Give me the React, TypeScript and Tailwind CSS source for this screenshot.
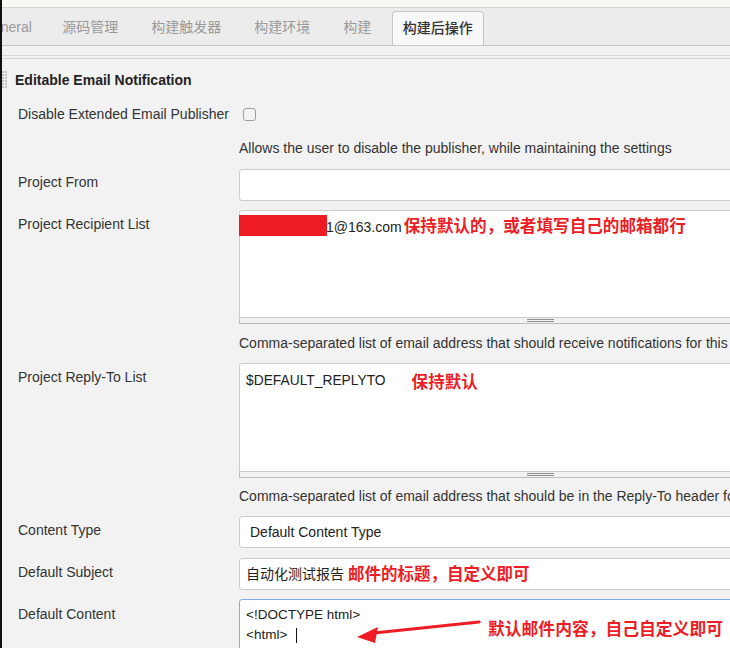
import React from "react";

function Grip() {
  return (
    <div className="h-[6px] border-l border-b border-[#bdbdbd] bg-[#f2f2f2] flex justify-center items-center">
      <div className="w-[27px] h-[3px] border-t border-b border-[#8f8f8f]" />
    </div>
  );
}

function Row({ label, pt, children }: { label: string; pt: string; children: React.ReactNode }) {
  return (
    <div className="flex">
      <div className={`w-[237px] shrink-0 pl-4 leading-[18px] text-[14px] text-[#333] ${pt}`}>{label}</div>
      <div className="w-[602px] shrink-0">{children}</div>
    </div>
  );
}

function Desc({ text, mt }: { text: string; mt: string }) {
  return (
    <div className={`flex ${mt}`}>
      <div className="w-[237px] shrink-0" />
      <div className="whitespace-nowrap leading-[18px] text-[14px] text-[#333]">{text}</div>
    </div>
  );
}

export default function App() {
  return (
    <div className="w-[730px] h-[648px] overflow-hidden bg-[#f2f2f2] border-l-2 border-[#111] relative font-['Liberation_Sans','Noto_Sans_CJK_SC',sans-serif]">
      {/* top strip */}
      <div className="h-[8px] bg-[#f8f9f3] border-b border-[#d3d3d3]" />
      {/* tab bar */}
      <div className="h-[38px] bg-[#ececec] border-b border-[#c8c8c8] flex items-end whitespace-nowrap text-[14px]">
        <div className="ml-[-36px] pl-4 pr-[14px] h-[34px] leading-[32px] text-[#9a9a9a]">General</div>
        <div className="px-[16.5px] h-[34px] leading-[32px] text-[#9a9a9a]">源码管理</div>
        <div className="px-[16.5px] h-[34px] leading-[32px] text-[#9a9a9a]">构建触发器</div>
        <div className="px-[16.5px] h-[34px] leading-[32px] text-[#9a9a9a]">构建环境</div>
        <div className="px-[16.5px] h-[34px] leading-[32px] text-[#9a9a9a]">构建</div>
        <div className="ml-[4px] h-[34px] pl-[10px] pr-[10px] leading-[32px] bg-[#f8f8f8] border border-b-0 border-[#c6c6c6] rounded-t-[4px] text-[#333] font-medium">
          构建后操作
        </div>
      </div>
      <div className="h-[10px] bg-[#f2f2f2] border-b border-[#d6d6d6]" />
      <div className="h-[3px] bg-[#f2f2f2] border-b border-[#d6d6d6]" />

      {/* content */}
      <div className="relative">
        {/* title */}
        <div className="mt-[11px] flex items-center h-[20px]">
          <svg width="6" height="18" className="shrink-0" viewBox="0 0 6 18">
            {[0, 3, 6, 9, 12, 15].map((y) =>
              [0, 3].map((x) => <rect key={`${x}-${y}`} x={x} y={y} width="2" height="2" fill="#c4c4c4" />)
            )}
          </svg>
          <div className="ml-[7px] text-[14px] font-bold text-[#222] leading-[20px]">Editable Email Notification</div>
        </div>

        {/* disable */}
        <div className="mt-[15px] flex h-[18px] items-center">
          <div className="w-[237px] shrink-0 pl-4 text-[14px] leading-[18px] text-[#333]">Disable Extended Email Publisher</div>
          <div className="ml-[4px] w-[13px] h-[13px] rounded-[3px] border border-[#9e9e9e] bg-[#f4f4f4]" />
        </div>

        <Desc mt="mt-[16px]" text="Allows the user to disable the publisher, while maintaining the settings" />

        {/* project from */}
        <div className="mt-[12px]">
          <Row label="Project From" pt="pt-[4px]">
            <div className="h-[32px] bg-white border border-[#cccccc] rounded-[3px]" />
          </Row>
        </div>

        {/* recipient list */}
        <div className="mt-[9px]">
          <Row label="Project Recipient List" pt="pt-[5px]">
            <div className="relative h-[108px] bg-white border border-[#cccccc] rounded-t-[3px] pt-[6px] leading-[20px] whitespace-nowrap">
              <div className="absolute left-[-1px] top-[4px] w-[88px] h-[21px] bg-[#ed1c24]" />
              <span className="ml-[86px] text-[14px] text-[#222]">1@163.com</span>
              <span className="ml-[2px] text-[16.6px] font-bold text-[#ee1c25]">保持默认的，或者填写自己的邮箱都行</span>
            </div>
            <Grip />
          </Row>
        </div>

        <Desc mt="mt-[10px]" text="Comma-separated list of email address that should receive notifications for this project." />

        {/* reply-to */}
        <div className="mt-[11px]">
          <Row label="Project Reply-To List" pt="pt-[5px]">
            <div className="h-[109px] bg-white border border-[#cccccc] rounded-t-[3px] pt-[7px] pl-[6px] leading-[20px] whitespace-nowrap">
              <div className="flex items-center h-[20px]">
                <span className="text-[13.8px] text-[#222]">$DEFAULT_REPLYTO</span>
                <span className="ml-[26px] mt-[3px] text-[16.6px] font-bold text-[#ee1c25]">保持默认</span>
              </div>
            </div>
            <Grip />
          </Row>
        </div>

        <Desc mt="mt-[9px]" text="Comma-separated list of email address that should be in the Reply-To header for this project." />

        {/* content type */}
        <div className="mt-[11px]">
          <Row label="Content Type" pt="pt-[5px]">
            <div className="h-[32px] bg-white border border-[#cccccc] rounded-[3px] pl-[10px] flex items-center text-[14px] text-[#222]">
              Default Content Type
            </div>
          </Row>
        </div>

        {/* subject */}
        <div className="mt-[10px]">
          <Row label="Default Subject" pt="pt-[5px]">
            <div className="h-[32px] bg-white border border-[#cccccc] rounded-[3px] pl-[6px] flex items-center whitespace-nowrap">
              <span className="text-[14px] text-[#222]">自动化测试报告</span>
              <span className="ml-[4px] text-[16.5px] font-bold text-[#ee1c25]">邮件的标题，自定义即可</span>
            </div>
          </Row>
        </div>

        {/* content */}
        <div className="mt-[9px]">
          <Row label="Default Content" pt="pt-[6px]">
            <div className="relative h-[60px] bg-white border border-[#82abe8] rounded-t-[3px] pt-[5px] pl-[6px] text-[13.5px] leading-[20px] text-[#222] whitespace-nowrap">
              <div>&lt;!DOCTYPE html&gt;</div>
              <div className="flex items-center">
                <span>&lt;html&gt;</span>
                <span className="ml-[9px] w-px h-[15px] bg-[#111]" />
              </div>
              <svg className="absolute left-[114px] top-[18px]" width="130" height="26" viewBox="0 0 130 26">
                <line x1="20" y1="15" x2="125" y2="4" stroke="#ee1c25" strokeWidth="3.2" strokeLinecap="round" />
                <polygon points="3,19 24,9 21,25" fill="#ee1c25" />
              </svg>
              <div className="absolute left-[248px] top-[20px] text-[16.8px] font-bold text-[#ee1c25] leading-[20px]">
                默认邮件内容，自己自定义即可
              </div>
            </div>
          </Row>
        </div>
      </div>
    </div>
  );
}
